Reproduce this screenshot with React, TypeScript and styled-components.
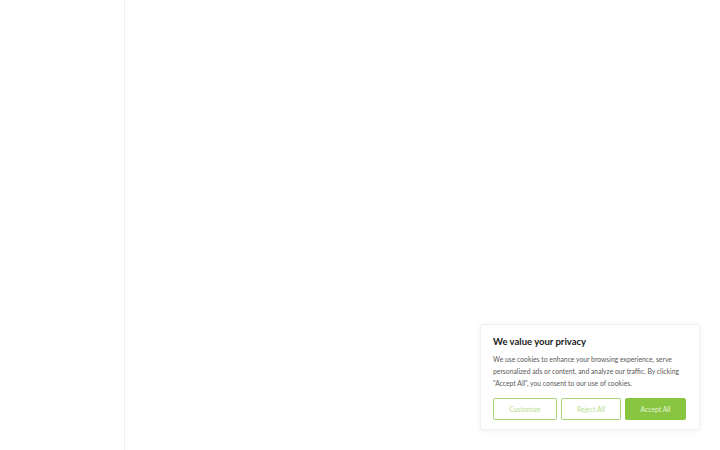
import React from "react";
import styled, { createGlobalStyle } from "styled-components";

const GlobalStyle = createGlobalStyle`
  html, body {
    margin: 0;
    padding: 0;
    background: #ffffff;
    font-family: Lato, "Open Sans", sans-serif;
  }
  * { box-sizing: border-box; }
`;

function App() {
  return (
    <>
      <GlobalStyle />
      <Page>
        <Sidebar />
        <Main>
          <ConsentCard>
            <Title>We value your privacy</Title>
            <Body>
              We use cookies to enhance your browsing experience, serve
              personalized ads or content, and analyze our traffic. By clicking
              "Accept All", you consent to our use of cookies.
            </Body>
            <ButtonRow>
              <Button $width={64}>Customize</Button>
              <Button $width={60}>Reject All</Button>
              <Button $width={61} $primary>
                Accept All
              </Button>
            </ButtonRow>
          </ConsentCard>
        </Main>
      </Page>
    </>
  );
}

export default App;

const Page = styled.div`
  display: flex;
  width: 720px;
  height: 450px;
  overflow: hidden;
`;

const Sidebar = styled.div`
  width: 125px;
  flex-shrink: 0;
  border-right: 1px solid #f0f0f0;
`;

const Main = styled.div`
  flex: 1;
  display: flex;
  align-items: flex-end;
  justify-content: flex-end;
  padding: 0 20px 20px 0;
`;

const ConsentCard = styled.div`
  width: 220px;
  padding: 11px 12px 9px;
  background: #ffffff;
  border: 1px solid #f0f0f0;
  border-radius: 3px;
  box-shadow: 0 1px 6px rgba(0, 0, 0, 0.06);
`;

const Title = styled.div`
  font-size: 9.5px;
  font-weight: 700;
  color: #212121;
  line-height: 12px;
  margin-bottom: 5px;
`;

const Body = styled.p`
  margin: 0 0 9px;
  font-size: 6.8px;
  line-height: 12px;
  color: #5a5a5a;
`;

const ButtonRow = styled.div`
  display: flex;
  gap: 4px;
`;

const Button = styled.button<{ $width: number; $primary?: boolean }>`
  width: ${(p) => p.$width}px;
  height: 22px;
  padding: 0;
  font-family: inherit;
  font-size: 6.8px;
  border-radius: 2px;
  border: 1px solid ${(p) => (p.$primary ? "#88c540" : "#a9d47a")};
  background: ${(p) => (p.$primary ? "#88c540" : "#ffffff")};
  color: ${(p) => (p.$primary ? "#e6f3d6" : "#b5dc8c")};
  cursor: pointer;
`;
